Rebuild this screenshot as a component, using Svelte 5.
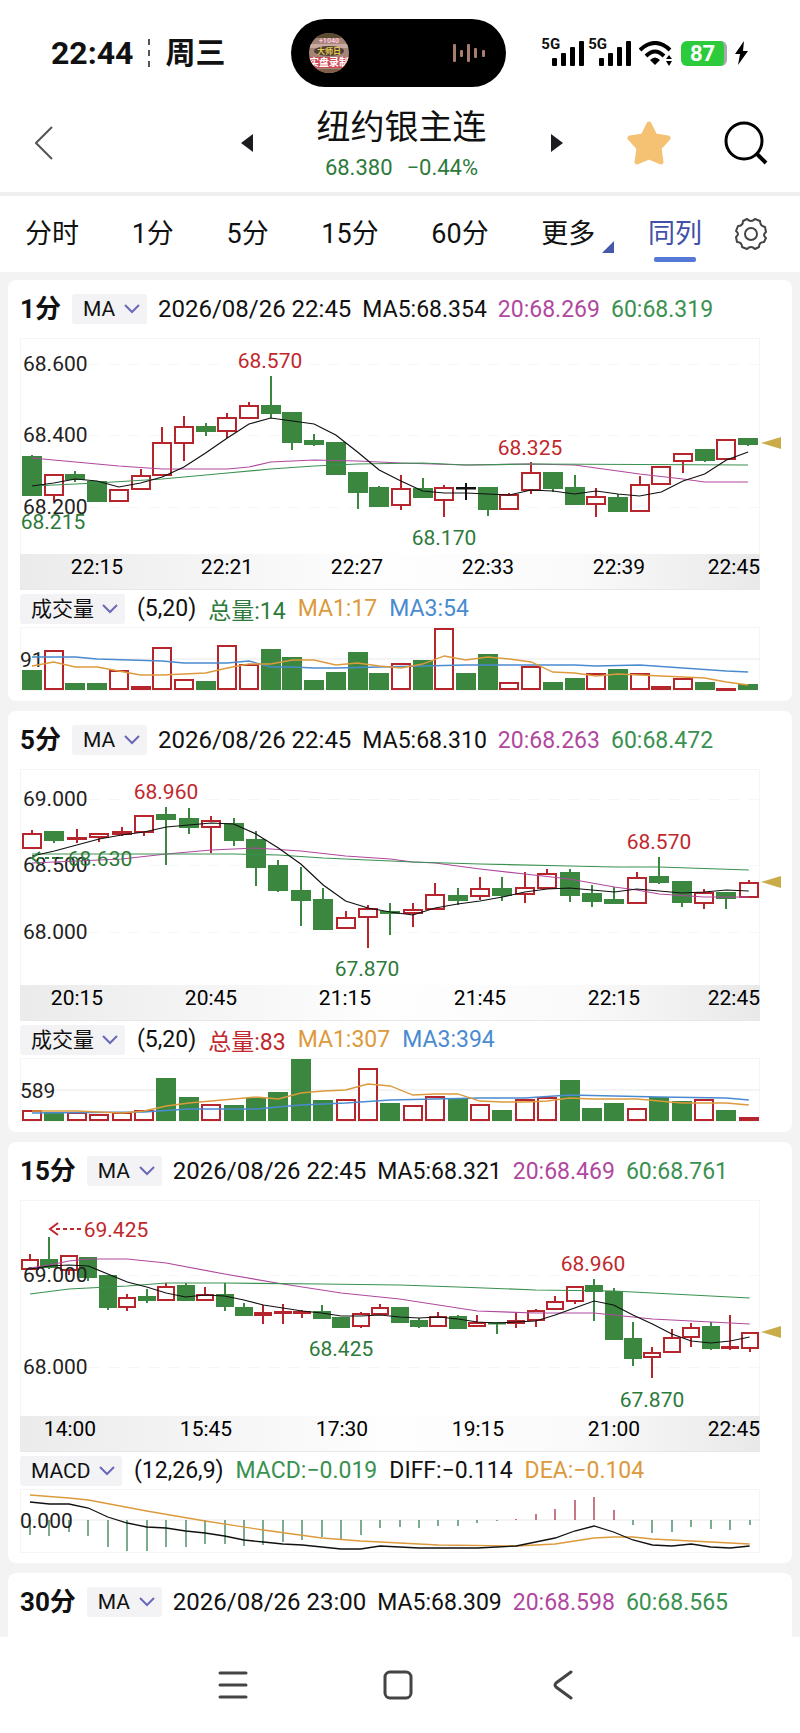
<script>
	const red = '#b5252b';
	const green = '#3c873f';
	const orange = '#dc9a3c';
	const blue = '#4a8bd0';
	const purple = '#b0489f';
	const lime = '#3a9150';

	const tabs = ['分时', '1分', '5分', '15分', '60分', '更多', '同列'];
	const activeTab = '同列';

	// candles: kind, high, body top, body bottom, low (chart units, y down)
	const charts = [
		{
			title: '1分',
			date: '2026/08/26 22:45',
			ma: ['MA5:68.354', '20:68.269', '60:68.319'],
			first: 12, step: 21.7, body: 18,
			levels: [['68.600', 26], ['68.400', 97], ['68.200', 169]],
			candles: [
				['g',117,118,157,157],['r',136,136,157,164],['g',133,136,141,144],['g',143,143,163,163],['r',151,151,163,163],
				['r',131,137,151,151],['r',89,104,137,138],['r',78,88,105,123],['g',85,88,93,98],['r',75,79,93,100],
				['r',64,67,80,81],['g',38,67,75,80],['g',74,74,104,112],['g',96,102,106,108],['g',104,104,136,137],
				['g',134,134,154,171],['g',148,149,168,169],['r',137,150,167,172],['g',140,150,159,159],['r',147,149,162,179],
				['k',145,149,150,162],['g',149,149,171,178],['r',155,156,171,171],['r',124,134,152,156],['g',134,134,150,154],
				['g',137,149,166,166],['r',150,158,166,179],['g',156,159,173,174],['r',138,146,173,173],['r',128,128,146,146],
				['r',115,115,123,135],['g',111,111,122,124],['r',101,101,121,121],['g',100,100,106,108]
			],
			lines: [
				[purple, '0,120 2,124 4,128 6,131 9,131 10,129 11,124 13,122 15,123 17,125 20,127 23,126 25,127 27,133 28,136 30,141 31,144 33,144'],
				[lime, '0,148 3,145 6,141 9,135 11,131 13,128 15,126 18,125 20,127 23,126 33,127'],
				['#111', '0,148 1,145 2,141 3,143 4,149 5,145 6,139 7,129 8,115 9,100 10,86 11,80 12,83 13,86 14,97 15,114 16,132 17,143 18,153 19,155 20,155 21,156 22,157 23,152 24,153 25,156 26,153 27,156 28,158 29,154 30,143 31,136 32,122 33,114']
			],
			notes: [
				{ text: '68.570', x: 250, y: 22, up: true }, { text: '68.325', x: 510, y: 109, up: true },
				{ text: '68.170', x: 424, y: 199 }, { text: '68.215', x: 33, y: 183 }
			],
			marker: 105,
			times: [['22:15', 77], ['22:21', 207], ['22:27', 337], ['22:33', 468], ['22:39', 599]],
			study: '成交量',
			values: [['(5,20)', '#111'], ['总量:14', '#2d7a3a'], ['MA1:17', orange], ['MA3:54', blue]],
			mid: ['91', 32],
			bars: [20,40,7,7,20,4,43,11,9,45,26,41,33,10,18,38,17,27,30,62,17,36,8,24,8,12,17,21,17,4,12,8,2,6],
			studyLines: [
				[blue, '0,30 2,30 3,32 6,34 7,36 9,36 10,34 11,40 12,40 13,41 14,41 16,40 18,39 20,38 25,38 26,39 28,38 30,41 32,44 33,45'],
				[orange, '0,39 1,35 2,40 3,40 4,44 5,48 6,48 8,46 9,41 10,37 11,37 12,33 13,33 14,38 15,36 16,39 17,41 18,37 19,29 20,33 21,30 22,32 23,35 24,45 25,46 26,49 27,47 28,48 29,49 30,50 31,51 32,55 33,58']
			]
		},
		{
			title: '5分',
			date: '2026/08/26 22:45',
			ma: ['MA5:68.310', '20:68.263', '60:68.472'],
			first: 12, step: 22.4, body: 18,
			levels: [['69.000', 30], ['68.500', 96], ['68.000', 163]],
			candles: [
				['r',61,64,79,80],['g',62,62,71,74],['r',60,68,70,74],['r',64,64,68,73],['r',58,62,65,67],
				['r',46,46,63,67],['g',38,45,50,96],['g',39,49,58,65],['r',47,51,58,84],['g',49,54,71,77],
				['g',62,70,98,117],['g',91,96,121,123],['g',98,121,131,157],['g',119,130,160,160],['r',142,148,159,159],
				['r',136,139,148,179],['g',134,142,144,166],['r',134,140,144,158],['r',114,125,140,140],['g',119,126,131,136],
				['r',108,119,127,131],['g',108,119,126,132],['r',103,118,125,134],['r',100,104,119,119],['g',100,103,126,133],
				['g',116,124,132,138],['g',118,130,134,134],['r',103,108,134,134],['g',88,107,113,115],['g',112,112,133,138],
				['r',120,123,134,140],['g',123,123,129,140],['r',111,113,128,128]
			],
			lines: [
				[purple, '0,94 1,93 4,90 6,85 8,81 9,80 10,79 12,82 14,87 16,90 17,93 18,94 20,100 22,105 24,110 26,118 27,121 28,125 30,128 32,128'],
				[lime, '0,85 5,85 9,85 11,86 13,89 15,91 17,93 20,95 24,97 26,98 28,98 32,101'],
				['#111', '0,87 1,82 2,76 3,70 4,66 5,63 6,58 7,56 8,54 9,55 10,65 11,79 12,95 13,116 14,132 15,139 16,143 17,146 18,139 19,135 20,132 21,128 22,123 23,120 24,119 25,121 26,123 27,120 28,122 29,124 30,123 31,121 32,122']
			],
			notes: [
				{ text: '68.960', x: 146, y: 22, up: true }, { text: '68.570', x: 639, y: 72, up: true },
				{ text: '67.870', x: 347, y: 199 }, { text: '68.630', x: 80, y: 89, arrow: 12 }
			],
			marker: 113,
			times: [['20:15', 57], ['20:45', 191], ['21:15', 325], ['21:45', 460], ['22:15', 594]],
			study: '成交量',
			values: [['(5,20)', '#111'], ['总量:83', '#c0282d'], ['MA1:307', orange], ['MA3:394', blue]],
			mid: ['589', 32],
			bars: [11,9,9,7,9,11,43,24,17,16,23,29,62,21,22,53,18,16,25,23,17,11,22,24,41,13,18,13,24,20,22,11,4],
			studyLines: [
				[blue, '0,55 5,54 7,51 10,51 12,47 14,45 16,42 18,41 20,40 22,40 24,37 26,38 28,39 31,40 32,42'],
				[orange, '0,53 2,53 4,55 5,53 6,48 7,45 8,43 9,41 10,39 11,41 12,35 13,33 14,32 15,26 16,28 17,37 18,36 19,36 20,43 21,44 22,44 23,43 24,40 25,41 27,41 29,45 31,45 32,47']
			]
		},
		{
			title: '15分',
			date: '2026/08/26 22:45',
			ma: ['MA5:68.321', '20:68.469', '60:68.761'],
			first: 10, step: 19.45, body: 16,
			levels: [['69.000', 75], ['68.000', 167]],
			candles: [
				['r',54,59,69,69],['g',37,59,67,69],['r',55,55,70,75],['g',57,57,77,81],['g',75,75,107,110],
				['r',94,97,107,111],['g',89,96,100,103],['r',83,86,100,100],['g',83,85,100,100],['r',87,94,100,100],
				['g',83,94,106,111],['g',103,107,115,115],['r',105,112,115,124],['r',104,111,113,124],['r',110,111,113,118],
				['g',105,111,118,119],['g',117,117,127,128],['r',112,113,126,128],['r',104,107,114,114],['g',107,107,122,122],
				['g',118,120,126,128],['r',112,116,126,127],['g',115,116,128,128],['r',115,122,126,126],['g',122,122,123,134],
				['r',112,120,123,128],['r',109,110,120,127],['r',96,101,109,109],['r',86,86,101,104],['g',79,85,91,121],
				['g',88,91,139,140],['g',122,138,158,166],['r',147,152,157,178],['r',129,137,152,152],['r',123,127,137,147],
				['g',122,126,148,150],['r',115,146,148,150],['r',132,132,148,152]
			],
			lines: [
				[purple, '0,68 1,65 2,61 3,59 5,59 7,63 10,74 13,84 16,93 18,97 19,99 21,105 23,111 26,113 29,113 31,117 32,119 34,121 37,124'],
				[lime, '0,94 2,89 5,86 7,83 10,83 15,84 19,85 22,87 26,90 30,91 34,95 37,98'],
				['#111', '0,69 1,66 2,65 3,66 4,74 5,82 6,87 7,93 8,97 9,95 10,96 11,100 12,105 13,108 14,111 15,113 16,116 17,116 18,115 19,117 20,118 21,117 22,119 23,122 24,123 25,122 26,121 27,115 28,108 29,101 30,105 31,115 32,124 33,134 34,141 35,143 36,141 37,137']
			],
			notes: [
				{ text: '69.425', x: 96, y: 29, up: true, arrow: 30 }, { text: '68.425', x: 321, y: 148 },
				{ text: '68.960', x: 573, y: 63, up: true }, { text: '67.870', x: 632, y: 199 }
			],
			marker: 132,
			times: [['14:00', 50], ['15:45', 186], ['17:30', 322], ['19:15', 458], ['21:00', 594]],
			study: 'MACD',
			values: [['(12,26,9)', '#111'], ['MACD:−0.019', lime], ['DIFF:−0.114', '#111'], ['DEA:−0.104', orange]],
			mid: ['0.000', 31],
			// distance from the zero line, positive is up
			sticks: [-15,-16,-12,-16,-27,-31,-31,-27,-27,-24,-24,-26,-25,-22,-20,-17,-19,-15,-8,-7,-8,-6,-6,-3,-1,1,6,11,20,23,10,-5,-13,-12,-7,-9,-10,-5],
			studyLines: [
				[orange, '0,6 2,9 3,11 6,22 9,32 12,41 15,49 17,52 19,54 21,56 25,57 27,55 28,52 29,49 30,48 31,48 32,50 34,52 37,55'],
				['#111', '0,13 1,15 2,15 3,19 4,28 5,34 6,38 7,39 8,42 9,44 10,47 11,51 12,53 13,55 14,56 15,58 16,60 17,60 18,57 19,58 20,59 21,59 22,59 23,59 24,58 25,57 26,53 27,49 28,42 29,37 30,43 31,51 32,56 33,57 34,55 35,58 36,59 37,57']
			]
		},
		{
			title: '30分',
			date: '2026/08/26 23:00',
			ma: ['MA5:68.309', '20:68.598', '60:68.565']
		}
	];

	const colors = { r: red, g: green, k: '#111' };

	function points(chart, list) {
		return list
			.split(' ')
			.map((pair) => {
				const [i, y] = pair.split(',').map(Number);
				return `${chart.first + i * chart.step},${y}`;
			})
			.join(' ');
	}
</script>

{#snippet picker(value, label)}
	<span class="picker">
		<select aria-label={label}>
			<option>{value}</option>
		</select>
		<svg width="16" height="10" viewBox="0 0 16 10"><path d="M1 1l7 7 7-7" fill="none" stroke="#6a68b8" stroke-width="2" /></svg>
	</span>
{/snippet}

{#snippet signal()}
	<span class="signal">
		<b>5G</b>
		<svg width="32" height="25" viewBox="0 0 32 25">
			<rect x="0" y="17" width="5" height="8" rx="1" />
			<rect x="9" y="12" width="5" height="13" rx="1" />
			<rect x="18" y="6" width="5" height="19" rx="1" />
			<rect x="27" y="0" width="5" height="25" rx="1" />
		</svg>
	</span>
{/snippet}

<div class="status">
	<div class="clock">
		<span>22:44</span>
		<i></i>
		<span class="day">周三</span>
	</div>
	<div class="island">
		<svg width="40" height="40" viewBox="0 0 40 40">
			<defs>
				<clipPath id="avatar"><circle cx="20" cy="20" r="20" /></clipPath>
			</defs>
			<g clip-path="url(#avatar)">
				<rect width="40" height="40" fill="#a58478" />
				<rect width="40" height="5" fill="#5a4a30" />
				<rect y="11" width="40" height="4" fill="#c9aaa0" />
				<ellipse cx="20" cy="18" rx="15" ry="5" fill="#4e4038" />
				<rect y="24" width="40" height="11" fill="#cf4a54" />
				<rect y="36" width="40" height="4" fill="#80604a" />
				<text x="20" y="10" font-size="7" font-weight="700" fill="#ffc4dc">+1040</text>
				<text x="20" y="21" font-size="8" font-weight="700" fill="#e6c94a">大师日</text>
				<text x="20" y="33" font-size="10" font-weight="700" fill="#fff">实盘录制</text>
			</g>
		</svg>
		<svg width="34" height="20" viewBox="0 0 34 20" fill="#a87c6e">
			<rect x="1" y="1" width="3" height="18" rx="1" />
			<rect x="8" y="7" width="3" height="7" rx="1" />
			<rect x="15" y="1" width="3" height="18" rx="1" />
			<rect x="22" y="5" width="3" height="10" rx="1" />
			<rect x="30" y="7" width="3" height="7" rx="1" />
		</svg>
	</div>
	<div class="system">
		{@render signal()}
		{@render signal()}
		<svg class="wifi" width="34" height="25" viewBox="0 0 34 25">
			<g fill="none" stroke="#000" stroke-width="4">
				<path d="M1 9Q16-5 31 9" />
				<path d="M7 15Q16 6 25 15" />
			</g>
			<path d="M11 19q5-5 10 0l-5 5z" />
			<path d="M27 18l3-4 3 4zM27 20h6l-3 5z" />
		</svg>
		<span class="battery">87</span>
		<svg width="13" height="24" viewBox="0 0 13 24"><path d="M9 0L0 13h5L3 24l10-14H8z" /></svg>
	</div>
</div>

<header>
	<button class="back" aria-label="返回">
		<svg width="18" height="34" viewBox="0 0 18 34"><path d="M17 1L1 17l16 16" fill="none" stroke="#555" stroke-width="2" /></svg>
	</button>
	<div class="symbol">
		<button aria-label="上一个"><svg width="12" height="18" viewBox="0 0 12 18"><path d="M12 0v18L0 9z" fill="#1c1c20" /></svg></button>
		<div class="name">
			<h1>纽约银主连</h1>
			<p><span>68.380</span><span>−0.44%</span></p>
		</div>
		<button aria-label="下一个"><svg width="12" height="18" viewBox="0 0 12 18"><path d="M0 0v18l12-9z" fill="#1c1c20" /></svg></button>
	</div>
	<div class="tools">
		<button aria-label="自选">
			<svg width="44" height="44" viewBox="0 0 44 44"><path d="M22 3l6 12 13 2-9 10 2 14-12-5-12 5 2-14-9-10 13-2z" fill="#f5c173" stroke="#f5c173" stroke-width="5" stroke-linejoin="round" /></svg>
		</button>
		<button aria-label="搜索">
			<svg width="44" height="44" viewBox="0 0 44 44" fill="none" stroke="#000" stroke-width="3"><circle cx="20" cy="20" r="18" /><path d="M32 32l10 10" stroke-width="4" /></svg>
		</button>
	</div>
</header>

<div class="tabs">
	<nav>
		{#each tabs as tab}
			<button class:active={tab === activeTab} class:more={tab === '更多'}>{tab}</button>
		{/each}
	</nav>
	<button aria-label="设置">
		<svg width="32" height="32" viewBox="0 0 32 32" fill="none" stroke="#444" stroke-width="2" stroke-linejoin="round">
			<path d="M12 1q4 4 8 0l5 2q0 5 5 6l1 5q-4 3 0 6l-2 4q-5 0-5 5l-4 2q-4-4-8 0l-5-2q0-5-5-5l-1-5q4-3 0-6l2-5q5 0 5-5z" />
			<circle cx="16" cy="16" r="6" />
		</svg>
	</button>
</div>

<main>
	{#each charts as chart}
		<section class:cut={!chart.candles}>
			<div class="head">
				<h2>{chart.title}</h2>
				{@render picker('MA', '主图指标')}
				<span class="date">{chart.date}</span>
				<span>{chart.ma[0]}</span>
				<span class="ma20">{chart.ma[1]}</span>
				<span class="ma60">{chart.ma[2]}</span>
			</div>
			{#if chart.candles}
				<svg class="plot" viewBox="0 0 764 252">
					<defs>
						<linearGradient id="strip">
							<stop offset="0" stop-color="#ebebeb" />
							<stop offset="0.5" stop-color="#fefefe" />
							<stop offset="0.75" stop-color="#fafafa" />
							<stop offset="1" stop-color="#e9e9e9" />
						</linearGradient>
					</defs>
					<rect x="0.5" y="0.5" width="739" height="216" fill="none" stroke="#f5f5f5" />
					<rect x="0" y="216" width="740" height="35" fill="url(#strip)" />
					<path d="M0 251.5h740" stroke="#e8e8e8" />
					{#each chart.levels as [, y]}
						<path d="M68 {y}.5H739" stroke="#f7f7f7" stroke-dasharray="12 8" />
					{/each}
					{#each chart.candles as [kind, high, top, bottom, low], i}
						{@const x = Math.round(chart.first + i * chart.step)}
						<g stroke={colors[kind]} stroke-width="2">
							{#if high < top}<path d="M{x} {high}V{top}" />{/if}
							{#if low > bottom}<path d="M{x} {bottom}V{low}" />{/if}
							<rect
								x={x - chart.body / 2}
								y={top + 1}
								width={chart.body}
								height={Math.max(bottom - top - 1, 0.5)}
								fill={kind === 'r' ? 'none' : colors[kind]}
							/>
						</g>
					{/each}
					{#each chart.levels as [text, y]}
						<text class="level" x="3" y={y + 7}>{text}</text>
					{/each}
					{#each chart.lines as [color, list]}
						<polyline points={points(chart, list)} fill="none" stroke={color} stroke-width="1.2" />
					{/each}
					{#each chart.notes as note}
						{@const color = note.up ? '#c0282d' : '#2d7a3a'}
						{#if note.arrow}
							<g stroke={color} fill="none" stroke-width="2">
								<path d="M{note.arrow + 8} {note.y - 6}l-8 6 8 6" />
								<path d="M{note.arrow + 6} {note.y}h28" stroke-dasharray="4 3" />
							</g>
						{/if}
						<text x={note.x} y={note.y + 8} fill={color} text-anchor="middle">{note.text}</text>
					{/each}
					{#each chart.times as [text, x]}
						<text {x} y="236" text-anchor="middle">{text}</text>
					{/each}
					<text x="740" y="236" text-anchor="end">22:45</text>
					<path d="M741 {chart.marker}l20-6v12z" fill="#c9ac47" />
				</svg>

				<div class="head study">
					{@render picker(chart.study, '副图指标')}
					{#each chart.values as [text, color]}
						<span style="color: {color}">{text}</span>
					{/each}
				</div>
				<svg class="plot" viewBox="0 0 764 64">
					<rect x="0.5" y="0.5" width="739" height="63" fill="none" stroke="#f5f5f5" />
					<path d="M0 {chart.mid[1]}H740" stroke="#e9e9e9" />
					{#each chart.bars ?? [] as h, i}
						{@const kind = chart.candles[i][0] === 'r' ? 'r' : 'g'}
						<rect
							x={Math.round(chart.first + i * chart.step) - 9}
							y={64 - h}
							width="18"
							height={Math.max(h - 2, 1)}
							fill={kind === 'r' ? '#fff' : green}
							stroke={colors[kind]}
							stroke-width="2"
						/>
					{/each}
					{#each chart.sticks ?? [] as h, i}
						<path
							d="M{Math.round(chart.first + i * chart.step)} 31v{-h}"
							stroke={h > 0 ? '#b04a5c' : '#4f8f6c'}
							stroke-width="1.5"
						/>
					{/each}
					<text class="level" x="0" y={chart.mid[1] + 8}>{chart.mid[0]}</text>
					{#each chart.studyLines as [color, list]}
						<polyline points={points(chart, list)} fill="none" stroke={color} stroke-width="1.3" />
					{/each}
				</svg>
			{/if}
		</section>
	{/each}
</main>

<footer>
	<button aria-label="菜单">
		<svg width="30" height="30" viewBox="0 0 30 30"><path d="M2 3h26M2 15h26M2 27h26" stroke="#444" stroke-width="3" stroke-linecap="round" /></svg>
	</button>
	<button aria-label="主页">
		<svg width="30" height="30" viewBox="0 0 30 30"><rect x="2" y="2" width="26" height="26" rx="5" fill="none" stroke="#444" stroke-width="3" /></svg>
	</button>
	<button aria-label="返回上页">
		<svg width="30" height="30" viewBox="0 0 30 30"><path d="M23 2L8 13q-2 2 0 4l15 11" fill="none" stroke="#444" stroke-width="3" stroke-linecap="round" /></svg>
	</button>
</footer>

<style>
	:global(body) {
		background: #fff;
		color: #111;
		font-family: Roboto, "Noto Sans CJK SC", sans-serif;
		font-size: 23px;
	}
	h1, h2, p {
		margin: 0;
	}
	button {
		display: flex;
		align-items: center;
		justify-content: center;
		padding: 0;
		border: 0;
		background: none;
		color: inherit;
		font: inherit;
	}
	svg {
		display: block;
		flex-shrink: 0;
	}

	.status {
		display: grid;
		grid-template-columns: 1fr auto 1fr;
		align-items: center;
		height: 68px;
		padding: 19px 52px 0 48px;
	}
	.clock {
		display: flex;
		align-items: center;
		padding-left: 3px;
		font-size: 32px;
		font-weight: 700;
	}
	.clock i {
		height: 28px;
		margin: 0 15px;
		border-left: 2px dashed #555;
	}
	.day {
		font-size: 30px;
		line-height: 34px;
	}
	.island {
		display: flex;
		align-items: center;
		justify-content: space-between;
		box-sizing: border-box;
		width: 215px;
		height: 68px;
		padding: 0 20px 0 18px;
		border-radius: 34px;
		background: #000;
	}
	.island text {
		text-anchor: middle;
	}
	.system {
		display: flex;
		align-items: center;
		justify-content: flex-end;
	}
	.signal {
		display: flex;
		align-items: flex-start;
		margin-right: 4px;
	}
	.signal b {
		margin: -4px -8px 0 0;
		font-size: 15px;
		line-height: 15px;
	}
	.wifi {
		margin: 0 8px 0 4px;
	}
	.battery {
		width: 43px;
		margin-right: 8px;
		border-right: 3px solid #aaa;
		border-radius: 6px;
		background: #2bcb3c;
		color: #fff;
		font-size: 22px;
		font-weight: 700;
		line-height: 25px;
		text-align: center;
	}

	header {
		display: grid;
		grid-template-columns: 1fr 340px 1fr;
		align-items: center;
		height: 98px;
		padding: 7px 32px 0 35px;
		border-bottom: 4px solid #eee;
	}
	.back {
		width: 18px;
	}
	.symbol {
		display: flex;
		align-items: center;
		justify-content: space-between;
		text-align: center;
	}
	.symbol button {
		width: 30px;
	}
	.name {
		padding-top: 6px;
	}
	h1 {
		font-size: 34px;
		font-weight: 400;
		line-height: 44px;
	}
	.symbol p {
		display: flex;
		justify-content: center;
		gap: 14px;
		color: #2d7a3a;
		font-size: 22px;
		line-height: 38px;
	}
	.tools {
		display: flex;
		justify-content: flex-end;
		gap: 53px;
	}

	.tabs {
		display: flex;
		align-items: center;
		gap: 33px;
		height: 76px;
		padding: 0 33px 0 25px;
	}
	.tabs nav {
		display: flex;
		flex: 1;
		justify-content: space-between;
	}
	nav button {
		position: relative;
		font-size: 27px;
		line-height: 40px;
		white-space: nowrap;
	}
	.active {
		color: #3f51a8;
	}
	.active::after {
		position: absolute;
		bottom: -8px;
		left: 6px;
		right: 6px;
		height: 5px;
		border-radius: 2px;
		background: #5578d6;
		content: '';
	}
	.more::after {
		position: absolute;
		right: -19px;
		bottom: 1px;
		border-bottom: 12px solid #4658ab;
		border-left: 12px solid transparent;
		content: '';
	}

	main {
		display: flex;
		flex-direction: column;
		gap: 10px;
		padding: 8px 8px 0;
		background: #f3f3f3;
	}
	section {
		padding: 0 8px 10px 12px;
		border-radius: 8px;
		background: #fff;
	}
	section.cut {
		padding-bottom: 6px;
		border-radius: 8px 8px 0 0;
	}
	.head {
		display: flex;
		align-items: center;
		gap: 11px;
		height: 58px;
		white-space: nowrap;
	}
	.head.study {
		gap: 12px;
		height: 37px;
	}
	h2 {
		font-size: 26px;
		line-height: 36px;
	}
	.date {
		font-size: 24px;
	}
	.ma20 {
		color: #b0489f;
	}
	.ma60 {
		color: #3a9150;
	}
	.picker {
		display: flex;
		align-items: center;
		border-radius: 3px;
		background: #f3f3f5;
	}
	.picker select {
		height: 30px;
		margin-right: -31px;
		padding: 0 31px 0 11px;
		border: 0;
		appearance: none;
		background: none;
		color: #111;
		font: inherit;
		font-size: 21px;
	}
	.picker svg {
		margin-right: 7px;
		margin-left: 8px;
		pointer-events: none;
	}
	.plot {
		width: 100%;
		height: auto;
	}
	.plot text {
		font-size: 21px;
	}
	.plot .level {
		fill: #222;
	}

	footer {
		display: flex;
		align-items: center;
		justify-content: center;
		gap: 135px;
		height: 96px;
		padding-right: 5px;
	}
	footer button {
		width: 30px;
	}
</style>
